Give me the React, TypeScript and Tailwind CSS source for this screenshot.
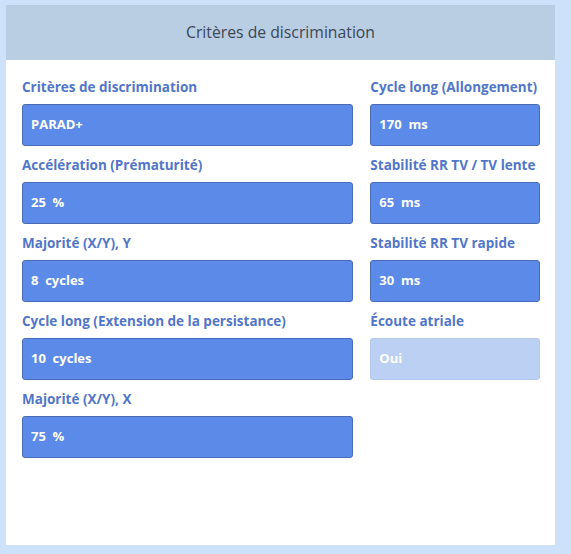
import React from "react";

type Field = { label: string; value: string; disabled?: boolean };

const left: Field[] = [
  { label: "Critères de discrimination", value: "PARAD+" },
  { label: "Accélération (Prématurité)", value: "25  %" },
  { label: "Majorité (X/Y), Y", value: "8  cycles" },
  { label: "Cycle long (Extension de la persistance)", value: "10  cycles" },
  { label: "Majorité (X/Y), X", value: "75  %" },
];

const right: Field[] = [
  { label: "Cycle long (Allongement)", value: "170  ms" },
  { label: "Stabilité RR TV / TV lente", value: "65  ms" },
  { label: "Stabilité RR TV rapide", value: "30  ms" },
  { label: "Écoute atriale", value: "Oui", disabled: true },
];

function FieldBox({ f }: { f: Field }) {
  return (
    <div className="flex flex-col">
      <div className="h-[36px] pt-[10px] text-[13.5px] font-bold leading-[18px] text-[#5176c9] whitespace-nowrap">
        {f.label}
      </div>
      <div
        className={
          f.disabled
            ? "h-[42px] rounded-[3px] border border-[#b5c9ef] bg-[#bcd0f4] px-[8px] flex items-center text-[13px] font-bold text-white whitespace-pre"
            : "h-[42px] rounded-[3px] border border-[#4a6cb8] bg-[#5b8ae8] px-[8px] flex items-center text-[13px] font-bold text-white whitespace-pre"
        }
      >
        {f.value}
      </div>
    </div>
  );
}

export default function App() {
  return (
    <div
      className="w-[571px] h-[554px] bg-[#cde1fb] pt-[5px] pl-[6px]"
      style={{ fontFamily: "'Open Sans', Lato, sans-serif" }}
    >
      <div className="w-[549px] h-[540px] bg-white flex flex-col">
        <div className="h-[55px] bg-[#b9cde3] flex items-center justify-center text-[15.75px] text-[#3b4656]">
          Critères de discrimination
        </div>
        <div className="flex gap-[17px] pl-[16px] pr-[15px] pt-[8px]">
          <div className="w-[332px] flex flex-col">
            {left.map((f) => (
              <FieldBox key={f.label} f={f} />
            ))}
          </div>
          <div className="w-[170px] flex flex-col">
            {right.map((f) => (
              <FieldBox key={f.label} f={f} />
            ))}
          </div>
        </div>
      </div>
    </div>
  );
}
